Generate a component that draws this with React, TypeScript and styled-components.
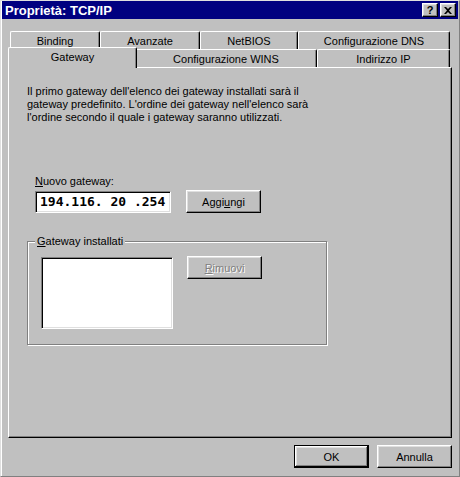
import React from 'react';
import styled, { createGlobalStyle } from 'styled-components';

const GlobalStyle = createGlobalStyle`
  html, body { margin: 0; padding: 0; background: #c0c0c0; }
  body { font-family: "Liberation Sans", Arial, sans-serif; font-size: 11px; color: #000; }
  * { box-sizing: border-box; }
`;

const Window = styled.div`
  width: 460px;
  height: 477px;
  background: #c0c0c0;
  border: 1px solid;
  border-color: #dfdfdf #808080 #808080 #dfdfdf;
  padding: 0 1px;
  display: flex;
  flex-direction: column;
  box-shadow: inset 1px 0 #fff;
`;

const TitleBar = styled.div`
  height: 18px;
  background: #000080;
  color: #fff;
  display: flex;
  align-items: center;
  padding: 0 2px 0 3px;
  font-weight: bold;
  font-size: 13px;
`;

const TitleText = styled.div`
  flex: 1;
  white-space: nowrap;
`;

const CaptionButtons = styled.div`
  display: flex;
  gap: 2px;
`;

const CaptionButton = styled.div`
  width: 16px;
  height: 14px;
  background: #c0c0c0;
  color: #000;
  border: 1px solid;
  border-color: #fff #000 #000 #fff;
  box-shadow: inset -1px -1px #808080, inset 1px 1px #dfdfdf;
  display: flex;
  align-items: center;
  justify-content: center;
  font-size: 11px;
  font-weight: bold;
  line-height: 1;
`;

const Body = styled.div`
  padding: 12px 6px 0;
  display: flex;
  flex-direction: column;
`;

const TabRow = styled.div`
  display: flex;
  height: 18px;
  padding: 0 2px;
  align-items: flex-start;
`;

const Tab = styled.div<{ $w: number; $active?: boolean }>`
  width: ${p => (p.$active ? p.$w + 4 : p.$w)}px;
  height: ${p => (p.$active ? 21 : 18)}px;
  margin: ${p => (p.$active ? '-2px -2px 0' : '0')};
  position: ${p => (p.$active ? 'relative' : 'static')};
  z-index: ${p => (p.$active ? 2 : 'auto')};
  padding-bottom: ${p => (p.$active ? '2px' : '0')};
  background: #c0c0c0;
  border-top: 1px solid #fff;
  border-left: 1px solid #fff;
  border-right: 1px solid #000;
  border-radius: 2px 2px 0 0;
  box-shadow: inset -1px 0 #808080;
  display: flex;
  align-items: center;
  justify-content: center;
  white-space: nowrap;
  flex: none;
`;

const Panel = styled.div`
  height: 371px;
  border: 1px solid;
  border-color: #fff #000 #000 #fff;
  box-shadow: inset -1px -1px #808080;
  padding: 17px 18px;
`;

const Paragraph = styled.p`
  margin: 0;
  line-height: 13px;
  white-space: nowrap;
`;

const NewGateway = styled.div`
  margin-top: 51px;
  padding-left: 8px;
`;

const Label = styled.div`
  line-height: 13px;
`;

const Mn = styled.span`
  text-decoration: underline;
`;

const InputRow = styled.div`
  display: flex;
  align-items: flex-start;
  gap: 15px;
  margin-top: 2px;
`;

const IpField = styled.div`
  margin-top: 1px;
  width: 136px;
  height: 22px;
  background: #fff;
  border: 1px solid;
  border-color: #808080 #fff #fff #808080;
  box-shadow: inset 1px 1px #000, inset -1px -1px #dfdfdf;
  font-family: "DejaVu Sans Mono", "Liberation Mono", monospace;
  font-weight: bold;
  font-size: 13px;
  line-height: 20px;
  padding-left: 4px;
  white-space: pre;
`;

const Button = styled.button<{ $default?: boolean }>`
  width: 75px;
  height: 23px;
  padding: 0;
  margin: 0;
  background: #c0c0c0;
  font-family: "Liberation Sans", Arial, sans-serif;
  font-size: 11px;
  color: ${p => (p.disabled ? '#808080' : '#000')};
  text-shadow: ${p => (p.disabled ? '1px 1px #fff' : 'none')};
  border: 1px solid;
  border-color: ${p => (p.$default ? '#000' : '#fff #000 #000 #fff')};
  box-shadow: ${p =>
    p.$default
      ? 'inset -1px -1px #000, inset 1px 1px #fff, inset -2px -2px #808080, inset 2px 2px #dfdfdf'
      : 'inset -1px -1px #808080, inset 1px 1px #dfdfdf'};
  flex: none;
`;

const Group = styled.fieldset`
  margin: 22px 0 0 0;
  width: 300px;
  padding: 9px 13px 15px 13px;
  border: 1px solid #808080;
  box-shadow: inset 1px 1px #fff, 1px 1px #fff;
  min-width: 0;
`;

const Legend = styled.legend`
  padding: 0 2px;
  margin-left: -6px;
  line-height: 13px;
  background: #c0c0c0;
`;

const GroupRow = styled.div`
  display: flex;
  align-items: flex-start;
  gap: 14px;
`;

const ListBox = styled.div`
  width: 132px;
  height: 72px;
  background: #fff;
  border: 1px solid;
  border-color: #808080 #fff #fff #808080;
  box-shadow: inset 1px 1px #000, inset -1px -1px #dfdfdf;
  flex: none;
`;

const RemoveButton = styled(Button)`
  margin-top: -1px;
`;

const Footer = styled.div`
  display: flex;
  justify-content: flex-end;
  gap: 8px;
  padding-top: 7px;
`;

const CloseIcon = () => (
  <svg width="8" height="7" viewBox="0 0 8 7">
    <path d="M0 0h2l2 2 2-2h2L5 3.5 8 7H6L4 5 2 7H0l3-3.5z" fill="#000" />
  </svg>
);

export default function App() {
  return (
    <>
      <GlobalStyle />
      <Window>
        <TitleBar>
          <TitleText>Proprietà: TCP/IP</TitleText>
          <CaptionButtons>
            <CaptionButton>?</CaptionButton>
            <CaptionButton><CloseIcon /></CaptionButton>
          </CaptionButtons>
        </TitleBar>
        <Body>
          <TabRow>
            <Tab $w={90}>Binding</Tab>
            <Tab $w={100}>Avanzate</Tab>
            <Tab $w={98}>NetBIOS</Tab>
            <Tab $w={152}>Configurazione DNS</Tab>
          </TabRow>
          <TabRow>
            <Tab $w={125} $active>Gateway</Tab>
            <Tab $w={182}>Configurazione WINS</Tab>
            <Tab $w={133}>Indirizzo IP</Tab>
          </TabRow>
          <Panel>
            <Paragraph>
              Il primo gateway dell'elenco dei gateway installati sarà il
              <br />
              gateway predefinito. L'ordine dei gateway nell'elenco sarà
              <br />
              l'ordine secondo il quale i gateway saranno utilizzati.
            </Paragraph>
            <NewGateway>
              <Label><Mn>N</Mn>uovo gateway:</Label>
              <InputRow>
                <IpField>194.116. 20 .254</IpField>
                <Button>Aggi<Mn>u</Mn>ngi</Button>
              </InputRow>
            </NewGateway>
            <Group>
              <Legend><Mn>G</Mn>ateway installati</Legend>
              <GroupRow>
                <ListBox />
                <RemoveButton disabled><Mn>R</Mn>imuovi</RemoveButton>
              </GroupRow>
            </Group>
          </Panel>
          <Footer>
            <Button $default>OK</Button>
            <Button>Annulla</Button>
          </Footer>
        </Body>
      </Window>
    </>
  );
}
